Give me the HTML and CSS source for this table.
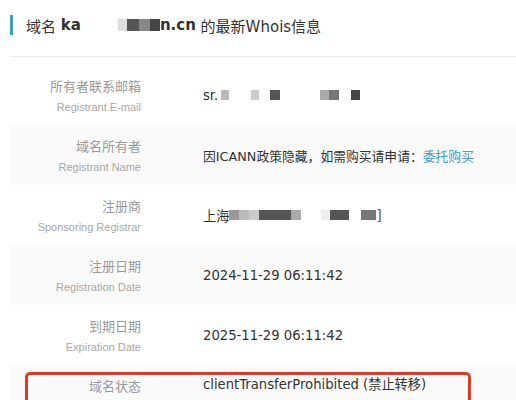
FILE: index.html
```html
<!DOCTYPE html>
<html lang="zh">
<head>
<meta charset="utf-8">
<link rel="stylesheet" href="styles.css">
</head>
<body>
<div class="page">
  <div class="title">
    <span class="bar"></span>
    <h2 class="title-text">域名 <b>ka</b><span class="gap g37"></span><span class="blk w9 c-ddd"></span><span class="blk w12 c-555"></span><span class="blk w11 c-888"></span><span class="blk w10 c-444"></span><b>n.cn</b> 的最新Whois信息</h2>
  </div>

  <div class="rows">
    <div class="row">
      <div class="label"><div class="zh">所有者联系邮箱</div><div class="en">Registrant E-mail</div></div>
      <div class="value"><span>sr.</span><span class="blk sm w8 c-bbb ml3"></span><span class="gap g22"></span><span class="blk sm w8 c-ccc"></span><span class="gap g11"></span><span class="blk sm w10 c-555"></span><span class="gap g40"></span><span class="blk sm w9 c-aaa"></span><span class="blk sm w10 c-777"></span><span class="gap g12"></span><span class="blk sm w9 c-444"></span></div>
    </div>
    <div class="row alt">
      <div class="label"><div class="zh">域名所有者</div><div class="en">Registrant Name</div></div>
      <div class="value cjk">因ICANN政策隐藏，如需购买请申请：<a class="link">委托购买</a></div>
    </div>
    <div class="row">
      <div class="label"><div class="zh">注册商</div><div class="en">Sponsoring Registrar</div></div>
      <div class="value">上海<span class="blk sm w10 c-999"></span><span class="blk sm w10 c-bbb"></span><span class="blk sm w10 c-ccc"></span><span class="blk sm w32 c-555"></span><span class="blk sm w10 c-aaa"></span><span class="gap g20"></span><span class="blk sm w9 c-eee"></span><span class="blk sm w19 c-555"></span><span class="gap g12"></span><span class="blk sm w15 c-777"></span><span class="bracket">]</span></div>
    </div>
    <div class="row alt">
      <div class="label"><div class="zh">注册日期</div><div class="en">Registration Date</div></div>
      <div class="value">2024-11-29 06:11:42</div>
    </div>
    <div class="row">
      <div class="label"><div class="zh">到期日期</div><div class="en">Expiration Date</div></div>
      <div class="value">2025-11-29 06:11:42</div>
    </div>
    <div class="row alt status">
      <div class="label"><div class="zh">域名状态</div></div>
      <div class="value">clientTransferProhibited (禁止转移)</div>
      <div class="highlight"></div>
    </div>
  </div>
</div>
</body>
</html>
```

FILE: styles.css
```css
* { box-sizing: border-box; }
html, body { margin: 0; padding: 0; background: #fff; }
body { font-family: "DejaVu Sans", "Noto Sans CJK SC", sans-serif; color: #333; overflow: hidden; }

.page { padding-left: 10px; }

.title {
  display: flex;
  align-items: center;
  height: 57px;
  border-bottom: 1px solid #eeeeee;
  padding-bottom: 6px;
}
.bar { width: 3px; height: 20px; background: #3d9ad6; margin-right: 13px; }
.title-text {
  margin: 0;
  font-size: 15px;
  font-weight: normal;
  color: #333;
  font-family: "DejaVu Sans", "Noto Sans CJK SC", sans-serif;
  display: flex;
  align-items: center;
  white-space: pre;
}
.title-text b { font-weight: bold; }

.rows { margin-top: 8px; }
.row { display: flex; align-items: center; height: 60px; position: relative; }
.row.alt { background: #fafafa; }
.label { width: 131px; text-align: right; flex-shrink: 0; padding-top: 2px; }
.zh { font-family: "Noto Sans CJK SC", sans-serif; font-size: 13px; color: #9a9a9a; line-height: 21px; }
.en { font-family: "Liberation Sans", Arial, sans-serif; font-size: 11px; color: #a8a8a8; line-height: 22px; }
.value { padding-left: 62px; font-size: 13.2px; color: #333; display: flex; align-items: center; white-space: pre; }
.value.cjk { font-size: 12.8px; }
.link { color: #3d9ad6; }

.status { align-items: flex-start; height: 70px; }
.status .label, .status .value { padding-top: 10px; }
.status .label { padding-top: 11px; }
.status .zh { line-height: 20px; }
.status .value { line-height: 20px; }
.highlight {
  position: absolute;
  left: 15px; top: 7px;
  width: 446px; height: 80px;
  border: 3px solid #e03a28;
  border-radius: 5px;
}

.blk { display: inline-block; height: 12px; }
.blk.sm { height: 10px; }
.gap { display: inline-block; }
.ml3 { margin-left: 3px; }
.w8 { width: 8px; } .w9 { width: 9px; } .w10 { width: 10px; }
.w11 { width: 11px; } .w12 { width: 12px; } .w15 { width: 15px; } .w19 { width: 19px; } .w32 { width: 32px; }
.g11 { width: 11px; } .g12 { width: 12px; } .g20 { width: 20px; }
.g22 { width: 22px; } .g37 { width: 37px; } .g40 { width: 40px; }
.c-ddd { background: #dddddd; } .c-ccc { background: #cccccc; } .c-bbb { background: #bbbbbb; }
.c-aaa { background: #aaaaaa; } .c-999 { background: #999999; } .c-888 { background: #888888; }
.c-777 { background: #777777; } .c-555 { background: #555555; } .c-444 { background: #444444; }
.c-eee { background: #eeeeee; }
.bracket { color: #555; }
```
